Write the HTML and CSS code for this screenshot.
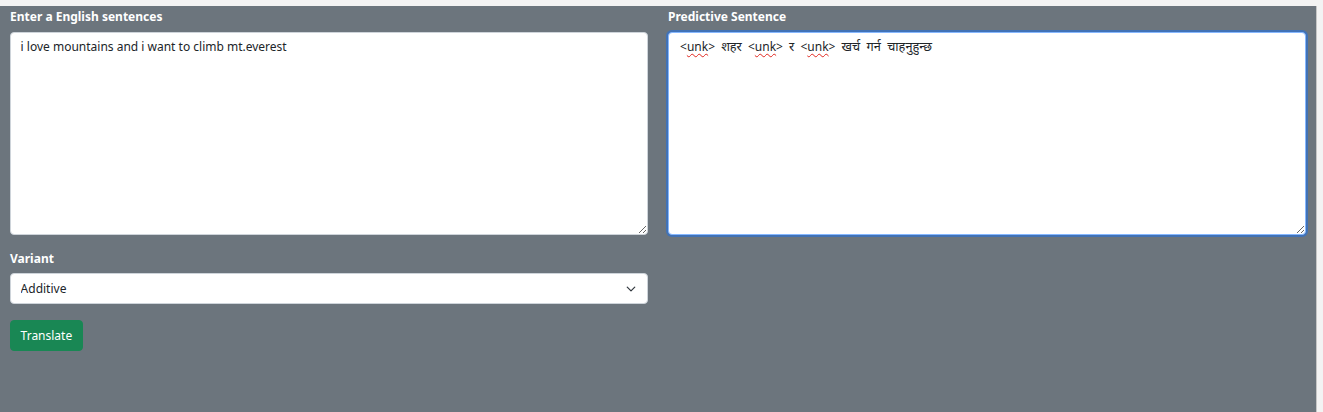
FILE: index.html
```html
<!DOCTYPE html>
<html lang="en">
<head>
<meta charset="utf-8">
<title>Translator</title>
<link rel="stylesheet" href="styles.css">
</head>
<body>
<div class="page">
  <div class="row">
    <div class="col">
      <label class="form-label" for="src">Enter a English sentences</label>
      <textarea id="src" class="form-control area" spellcheck="false">i love mountains and i want to climb mt.everest</textarea>
      <label class="form-label variant-label" for="variant">Variant</label>
      <div class="select-wrap">
        <select id="variant" class="form-select">
          <option>Additive</option>
        </select>
        <svg class="chevron" width="10" height="10" viewBox="0 0 16 16"><path d="M2 5l6 6 6-6" fill="none" stroke="#343a40" stroke-width="2" stroke-linecap="round" stroke-linejoin="round"/></svg>
      </div>
      <button class="btn" type="button">Translate</button>
    </div>
    <div class="col">
      <label class="form-label">Predictive Sentence</label>
      <div class="form-control area out focused"><span class="sp">&lt;<u>unk</u>&gt;</span> <span class="dev">शहर</span> <span class="sp">&lt;<u>unk</u>&gt;</span> <span class="dev">र</span> <span class="sp">&lt;<u>unk</u>&gt;</span> <span class="dev">खर्च गर्न चाहनुहुन्छ</span></div>
    </div>
  </div>
</div>
</body>
</html>
```
FILE: styles.css
```css
html, body {
  margin: 0;
  padding: 0;
  background: #f3f3f3;
}
body {
  font-family: "Noto Sans", "Open Sans", "Liberation Sans", sans-serif;
  font-size: 12px;
  line-height: 1.5;
  color: #212529;
}
.page {
  margin-top: 6px;
  width: 1317px;
  height: 406px;
  box-sizing: border-box;
  background: #6c757d;
  border-right: 1px solid #c6c6c6;
  padding: 1px 10px 0 10px;
}
.row {
  display: grid;
  grid-template-columns: 638px 638px;
  column-gap: 20px;
  align-items: start;
}
.col {
  display: flex;
  flex-direction: column;
  align-items: flex-start;
}
.form-label {
  display: block;
  color: #fff;
  font-weight: 700;
  font-size: 12px;
  line-height: 19px;
  margin-bottom: 6px;
}
.variant-label {
  margin-top: 14px;
  margin-bottom: 5px;
}
.form-control {
  box-sizing: border-box;
  width: 638px;
  font-family: inherit;
  font-size: 12px;
  line-height: 19px;
  color: #212529;
  background: #fff;
  border: 1px solid #ced4da;
  border-radius: 4px;
  padding: 4px 9.6px;
  margin: 0;
  outline: none;
}
.area {
  height: 203px;
  resize: vertical;
  overflow: auto;
  display: block;
}
.out {
  white-space: pre-wrap;
  word-spacing: 3px;
  padding-left: 11px;
}
.dev {
  font-size: 12.8px;
}
.focused {
  border-color: #86b7fe;
  box-shadow: 0 0 0 2px rgba(13, 110, 253, 0.45);
}
.sp u {
  text-decoration: underline wavy #e0271f;
  text-decoration-thickness: 1px;
  text-underline-offset: 2px;
}
.select-wrap {
  position: relative;
  width: 638px;
}
.form-select {
  box-sizing: border-box;
  display: block;
  width: 638px;
  height: 31px;
  appearance: none;
  -webkit-appearance: none;
  font-family: inherit;
  font-size: 12px;
  line-height: 1.5;
  color: #212529;
  background: #fff;
  border: 1px solid #ced4da;
  border-radius: 4px;
  padding: 3px 30px 3px 9.6px;
  margin: 0;
  outline: none;
}
.chevron {
  position: absolute;
  right: 12px;
  top: 11px;
  pointer-events: none;
}
.btn {
  margin-top: 16px;
  font-family: inherit;
  font-size: 12px;
  line-height: 19px;
  color: #fff;
  background: #198754;
  border: 1px solid #198754;
  border-radius: 4px;
  padding: 5px 9.6px;
  cursor: pointer;
}
```
